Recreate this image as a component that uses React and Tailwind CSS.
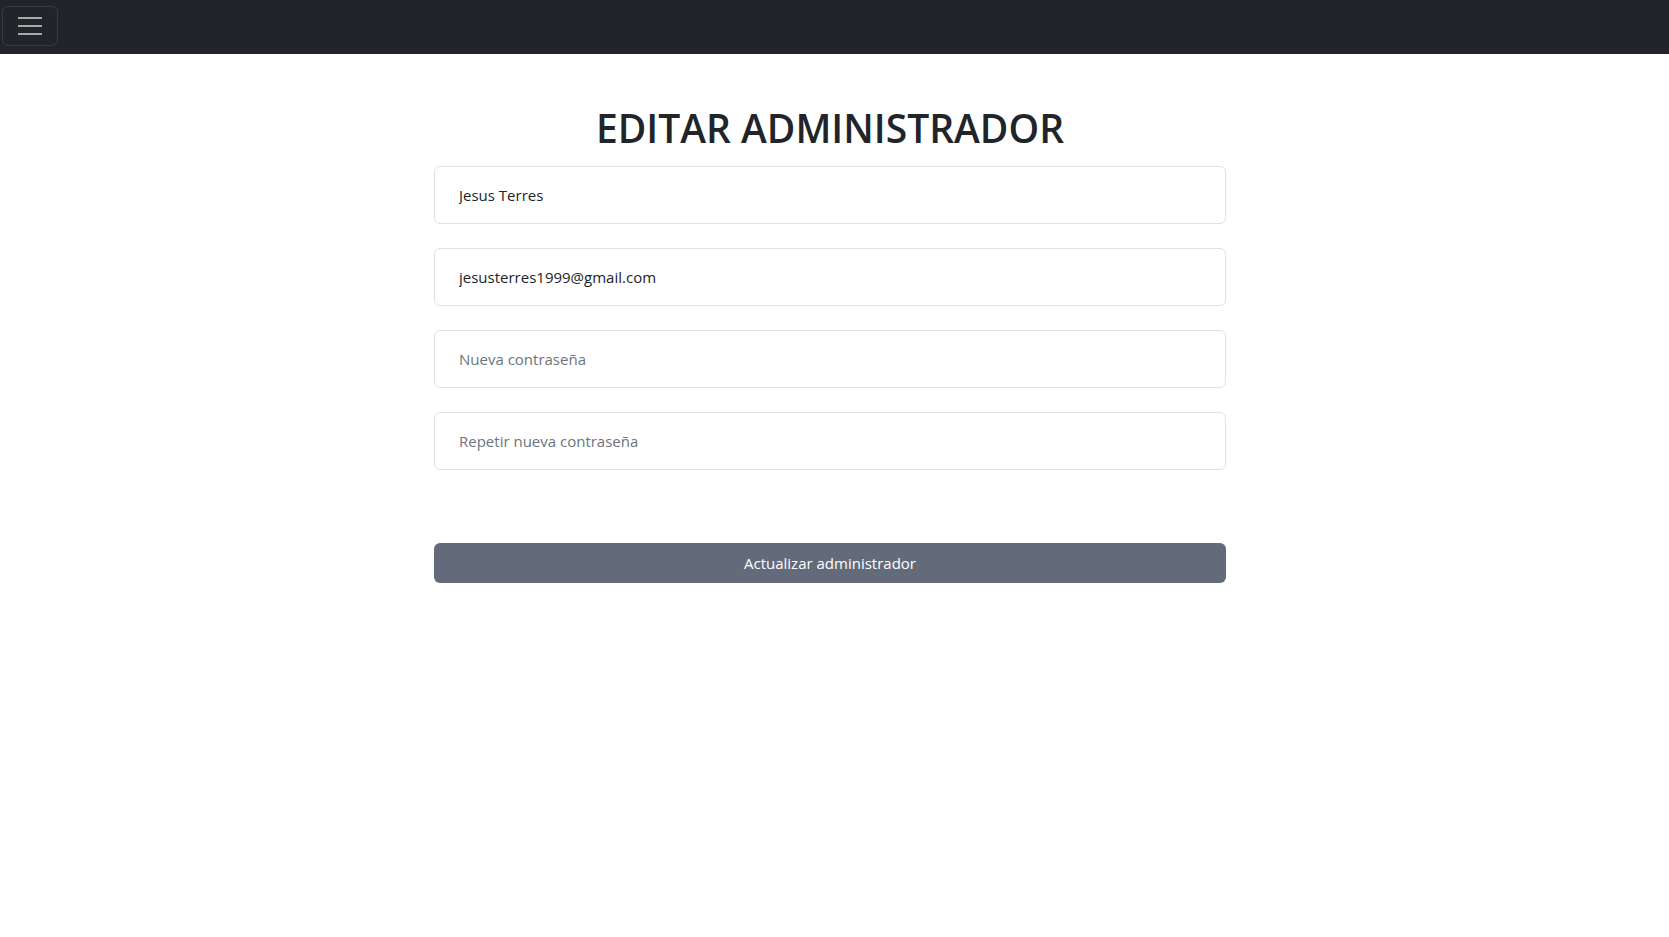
import { useState } from 'react';

const fields = [
  { name: 'nombre', type: 'text', value: 'Jesus Terres', placeholder: 'Nombre' },
  { name: 'email', type: 'email', value: 'jesusterres1999@gmail.com', placeholder: 'Correo' },
  { name: 'password', type: 'password', value: '', placeholder: 'Nueva contraseña' },
  { name: 'password2', type: 'password', value: '', placeholder: 'Repetir nueva contraseña' }
];

const App = () => {
  const [form, setForm] = useState(
    Object.fromEntries(fields.map((field) => [field.name, field.value]))
  );

  return (
    <div className="min-h-screen bg-white text-[#212529]" style={{ fontFamily: '"Open Sans", "Noto Sans", sans-serif' }}>
      <nav className="flex h-[54px] items-start bg-[#212529] pl-[2px] pt-[6px]">
        <button
          type="button"
          aria-label="Toggle navigation"
          className="flex h-[40px] w-[56px] flex-col items-center justify-center gap-[6px] rounded-[6px] border border-white/10"
        >
          <span className="block h-[2px] w-[24px] bg-[#a6a8aa]" />
          <span className="block h-[2px] w-[24px] bg-[#a6a8aa]" />
          <span className="block h-[2px] w-[24px] bg-[#a6a8aa]" />
        </button>
      </nav>

      <main className="flex justify-center pr-[9px]">
        <form className="flex w-[792px] flex-col" onSubmit={(event) => event.preventDefault()}>
          <h1 className="mt-[50px] mb-[15px] text-center text-[39px] font-semibold leading-[47px]">
            EDITAR ADMINISTRADOR
          </h1>
          <div className="flex flex-col gap-[24px]">
            {fields.map((field) => (
              <input
                key={field.name}
                type={field.type === 'password' ? 'text' : field.type}
                value={form[field.name]}
                placeholder={field.placeholder}
                onChange={(event) => setForm({ ...form, [field.name]: event.target.value })}
                className="h-[58px] w-full rounded-[6px] border border-[#dee2e6] bg-white px-[24px] text-[15px] text-[#212529] placeholder:text-[#6c757d] focus:outline-none"
              />
            ))}
          </div>
          <button
            type="submit"
            className="mt-[73px] h-[40px] w-full rounded-[6px] bg-[#636b7b] text-[15px] text-white"
          >
            Actualizar administrador
          </button>
        </form>
      </main>
    </div>
  );
};

export default App;
